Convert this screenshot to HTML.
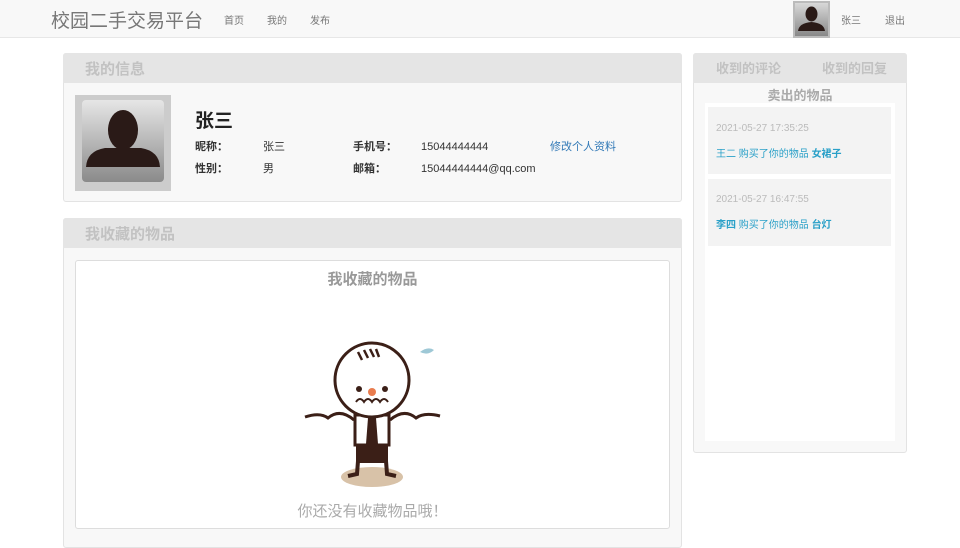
<!DOCTYPE html>
<html><head><meta charset="utf-8"><style>
*{margin:0;padding:0;box-sizing:border-box}
body{width:960px;height:531px;overflow:hidden;background:#fff;font-family:"Liberation Sans","Noto Sans CJK SC",sans-serif;position:relative}
.abs{position:absolute}
.nav{left:0;top:0;width:960px;height:38px;background:#f8f8f8;border-bottom:1px solid #e7e7e7}
.panel{background:#f8f8f8;border:1px solid #e3e3e3;border-radius:3px}
.ph{background:#e5e5e5;color:#c2c2c2;font-weight:bold;font-size:15px}
.t{font-size:11px;color:#333;line-height:12px}
</style></head><body>
<div class="abs nav"></div>
<div class="abs" style="left:51px;top:6px;font-size:19px;color:#777">校园二手交易平台</div>
<div class="abs" style="left:224px;top:12px;font-size:10px;color:#777">首页</div>
<div class="abs" style="left:267px;top:12px;font-size:10px;color:#777">我的</div>
<div class="abs" style="left:310px;top:12px;font-size:10px;color:#777">发布</div>
<svg class="abs" style="left:793px;top:1px" width="37" height="37" viewBox="0 0 37 37"><defs><linearGradient id="g" x1="0" y1="0" x2="0" y2="1"><stop offset="0" stop-color="#d8d8d8"/><stop offset="1" stop-color="#888"/></linearGradient></defs><rect width="37" height="37" fill="#bbb"/><rect x="2" y="2" width="33" height="33" fill="url(#g)"/><ellipse cx="18.5" cy="13" rx="6" ry="7.5" fill="#2a1a17"/><path d="M5 30 Q6 22 18.5 21 Q31 22 32 30Z" fill="#2a1a17"/></svg>
<div class="abs" style="left:841px;top:12px;font-size:10px;color:#777">张三</div>
<div class="abs" style="left:885px;top:12px;font-size:10px;color:#777">退出</div>

<div class="abs panel" style="left:63px;top:53px;width:619px;height:149px"></div>
<div class="abs ph" style="left:63px;top:53px;width:619px;height:30px;padding:5px 22px;border-radius:3px 3px 0 0">我的信息</div>
<svg class="abs" style="left:75px;top:95px" width="96" height="96" viewBox="0 0 96 96"><defs><linearGradient id="h" x1="0" y1="0" x2="0" y2="1"><stop offset="0" stop-color="#e6e6e6"/><stop offset="1" stop-color="#8a8a8a"/></linearGradient></defs><rect width="96" height="96" fill="#ccc"/><rect x="7" y="5" width="82" height="82" rx="4" fill="url(#h)"/><ellipse cx="48" cy="35" rx="15" ry="20" fill="#2a1a17"/><path d="M11 72 Q12 56 30 53 L66 53 Q84 56 85 72Z" fill="#2a1a17"/></svg>
<div class="abs" style="left:195px;top:106px;font-size:19px;font-weight:bold;color:#222">张三</div>
<div class="abs t" style="left:195px;top:141px;font-weight:bold">昵称：</div>
<div class="abs t" style="left:263px;top:141px">张三</div>
<div class="abs t" style="left:353px;top:141px;font-weight:bold">手机号：</div>
<div class="abs t" style="left:421px;top:141px">15044444444</div>
<div class="abs t" style="left:550px;top:141px;color:#337ab7">修改个人资料</div>
<div class="abs t" style="left:195px;top:163px;font-weight:bold">性别：</div>
<div class="abs t" style="left:263px;top:163px">男</div>
<div class="abs t" style="left:353px;top:163px;font-weight:bold">邮箱：</div>
<div class="abs t" style="left:421px;top:163px">15044444444@qq.com</div>

<div class="abs panel" style="left:63px;top:218px;width:619px;height:330px"></div>
<div class="abs ph" style="left:63px;top:218px;width:619px;height:30px;padding:5px 22px;border-radius:3px 3px 0 0">我收藏的物品</div>
<div class="abs" style="left:75px;top:260px;width:595px;height:269px;background:#fff;border:1px solid #ddd;border-radius:3px"></div>
<div class="abs" style="left:75px;top:268px;width:595px;text-align:center;font-size:15px;font-weight:bold;color:#999">我收藏的物品</div>
<svg class="abs" style="left:300px;top:340px" width="145" height="150" viewBox="0 0 145 150">
<ellipse cx="72" cy="137" rx="31" ry="10" fill="#d8c2a8"/>
<rect x="56" y="95" width="32" height="28" fill="#3b1f17"/>
<rect x="55" y="75" width="34" height="30" fill="#fff" stroke="#3b1f17" stroke-width="3"/>
<path d="M68 78 L76 78 L78 104 L72 110 L66 104Z" fill="#3b1f17"/>
<path d="M54 80 Q40 68 28 78 Q20 72 5 77 M90 80 Q104 68 116 78 Q124 72 140 76" stroke="#3b1f17" stroke-width="3" fill="none"/>
<path d="M58 121 L57 134 L48 136 M86 121 L87 134 L96 136" stroke="#3b1f17" stroke-width="4" fill="none"/>
<circle cx="72" cy="40" r="37" fill="#fff" stroke="#3b1f17" stroke-width="3"/>
<path d="M58 12 L62 20 M64 10 L68 18 M70 9 L74 17 M76 9 L79 17" stroke="#3b1f17" stroke-width="2.5"/>
<circle cx="59" cy="49" r="3" fill="#3b1f17"/><circle cx="85" cy="49" r="3" fill="#3b1f17"/>
<circle cx="72" cy="52" r="4" fill="#e97c4e"/>
<path d="M56 62 Q60 56 64 62 Q68 56 72 62 Q76 56 80 62 Q84 56 88 62" stroke="#3b1f17" stroke-width="2" fill="none"/>
<path d="M120 12 Q128 6 134 10 Q128 16 120 12Z" fill="#9ec8d6"/>
</svg>
<div class="abs" style="left:75px;top:500px;width:595px;text-align:center;font-size:15px;color:#aaa">你还没有收藏物品哦！</div>

<div class="abs panel" style="left:693px;top:53px;width:214px;height:400px"></div>
<div class="abs ph" style="left:693px;top:53px;width:214px;height:30px;border-radius:3px 3px 0 0;font-size:13px"><span class="abs" style="left:23px;top:5px">收到的评论</span><span class="abs" style="left:129px;top:5px">收到的回复</span></div>
<div class="abs" style="left:693px;top:85px;width:214px;text-align:center;font-size:13px;color:#aaa;font-weight:bold">卖出的物品</div>
<div class="abs" style="left:705px;top:103px;width:190px;height:338px;background:#fff"></div>
<div class="abs" style="left:708px;top:107px;width:183px;height:67px;background:#f3f3f3"></div>
<div class="abs" style="left:708px;top:179px;width:183px;height:67px;background:#f3f3f3"></div>
<div class="abs" style="left:716px;top:123px;font-size:10px;color:#bbb">2021-05-27 17:35:25</div>
<div class="abs" style="left:716px;top:145px;font-size:10px;color:#2aa0c8">王二 购买了你的物品 <b>女裙子</b></div>
<div class="abs" style="left:716px;top:194px;font-size:10px;color:#bbb">2021-05-27 16:47:55</div>
<div class="abs" style="left:716px;top:216px;font-size:10px;color:#2aa0c8"><b>李四</b> 购买了你的物品 <b>台灯</b></div>
</body></html>
